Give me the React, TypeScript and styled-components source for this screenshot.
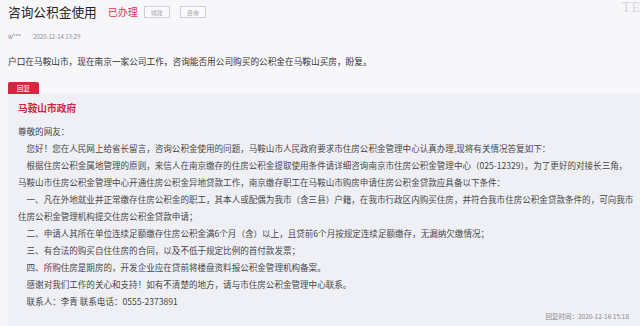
import * as React from "react";
import styled, { createGlobalStyle } from "styled-components";

const GlobalStyle = createGlobalStyle`
  html, body {
    margin: 0;
    padding: 0;
    background: #f7f6f9;
    font-family: "Noto Sans CJK SC", "Noto Sans", sans-serif;
    overflow: hidden;
  }
`;

const Page = styled.div`
  position: relative;
  width: 640px;
  height: 326px;
  padding-left: 8px;
  box-sizing: border-box;
  overflow: hidden;
`;

const Watermark = styled.span`
  /* 右上角被裁掉的字 */
  position: absolute;
  top: 0;
  left: 622px;
  font-family: "Liberation Serif", serif;
  font-size: 14px;
  color: #d6d6d9;
  letter-spacing: 1px;
`;

const TitleRow = styled.div`
  display: flex;
  align-items: center;
  height: 18px;
  padding-top: 3px;
`;

const Title = styled.h1`
  margin: 0;
  font-size: 12.7px;
  font-weight: 400;
  color: #222;
  line-height: 18px;
`;

const Status = styled.span`
  margin-left: 11px;
  font-size: 10px;
  color: #e0344a;
  line-height: 14px;
`;

const Tag = styled.span`
  display: inline-flex;
  align-items: center;
  justify-content: center;
  box-sizing: border-box;
  width: 26px;
  height: 12px;
  margin-left: ${(p: { gap: number }) => p.gap}px;
  border: 1px solid #cfcfd4;
  font-size: 6px;
  color: #a6a6ab;
  background: #fafafc;
`;

const Meta = styled.div`
  display: flex;
  gap: 12px;
  height: 10px;
  margin-top: 11px;
  font-size: 6px;
  line-height: 10px;
  color: #8a8a8f;
`;

const Question = styled.div`
  height: 13px;
  margin-top: 13px;
  font-size: 8.66px;
  line-height: 13px;
  color: #333;
`;

const Reply = styled.section`
  display: flex;
  flex-direction: column;
  margin-top: 14px;
`;

const ReplyLabel = styled.div`
  display: flex;
  align-items: center;
  justify-content: center;
  width: 31px;
  height: 12px;
  border-radius: 2px 2px 0 0;
  background: #d3283d;
  color: #fff;
  font-size: 6.5px;
  line-height: 12px;
`;

const Panel = styled.div`
  /* 面板延伸到窗口右侧之外 */
  margin-right: -14px;
  background: #eff0f5;
  padding: 7px 0 3px 10px;
  height: 232px;
  box-sizing: border-box;
`;

const Dept = styled.div`
  font-size: 9.7px;
  font-weight: 700;
  color: #c9283d;
  line-height: 14px;
`;

const Body = styled.div`
  margin-top: 8px;
  font-size: 8.55px;
  line-height: 17px;
  color: #474747;
`;

const Para = styled.p`
  margin: 0;
  text-indent: ${(p: { indent?: boolean }) => (p.indent ? "1em" : "0")};
`;

const ReplyTime = styled.div`
  text-align: right;
  margin-top: 1px;
  margin-right: 25px;
  font-size: 6.5px;
  line-height: 10px;
  color: #8a8a8f;
`;

// 每段按原图的换行位置分行
const paragraphs: string[][] = [
  ["您好！您在人民网上给省长留言，咨询公积金使用的问题，马鞍山市人民政府要求市住房公积金管理中心认真办理,现将有关情况答复如下："],
  [
    "根据住房公积金属地管理的原则，来信人在南京缴存的住房公积金提取使用条件请详细咨询南京市住房公积金管理中心（025-12329）。为了更好的对接长三角，",
    "马鞍山市住房公积金管理中心开通住房公积金异地贷款工作，南京缴存职工在马鞍山市购房申请住房公积金贷款应具备以下条件：",
  ],
  [
    "一、凡在外地就业并正常缴存住房公积金的职工，其本人或配偶为我市（含三县）户籍，在我市行政区内购买住房，并符合我市住房公积金贷款条件的，可向我市",
    "住房公积金管理机构提交住房公积金贷款申请；",
  ],
  ["二、申请人其所在单位连续足额缴存住房公积金满6个月（含）以上，且贷前6个月按规定连续足额缴存，无漏纳欠缴情况；"],
  ["三、有合法的购买自住住房的合同，以及不低于规定比例的首付款发票；"],
  ["四、所购住房是期房的，开发企业应在贷前将楼盘资料报公积金管理机构备案。"],
  ["感谢对我们工作的关心和支持！如有不清楚的地方，请与市住房公积金管理中心联系。"],
  ["联系人：李青  联系电话：0555-2373891"],
];

const App: React.FC = () => {
  return (
    <>
      <GlobalStyle />
      <Page>
        <Watermark>TE</Watermark>
        <TitleRow>
          <Title>咨询公积金使用</Title>
          <Status>已办理</Status>
          <Tag gap={6}>城建</Tag>
          <Tag gap={10}>咨询</Tag>
        </TitleRow>
        <Meta>
          <span>w***</span>
          <span>2020-12-14 13:29</span>
        </Meta>
        <Question>
          户口在马鞍山市，现在南京一家公司工作，咨询能否用公司购买的公积金在马鞍山买房，盼复。
        </Question>
        <Reply>
          <ReplyLabel>回复</ReplyLabel>
          <Panel>
            <Dept>马鞍山市政府</Dept>
            <Body>
              <Para>尊敬的网友：</Para>
              {paragraphs.map((lines) => (
                <Para indent key={lines[0]}>
                  {lines.map((l, i) => (
                    <React.Fragment key={i}>
                      {i > 0 && <br />}
                      {l}
                    </React.Fragment>
                  ))}
                </Para>
              ))}
            </Body>
            <ReplyTime>回复时间：2020-12-16 15:18</ReplyTime>
          </Panel>
        </Reply>
      </Page>
    </>
  );
};

export default App;
